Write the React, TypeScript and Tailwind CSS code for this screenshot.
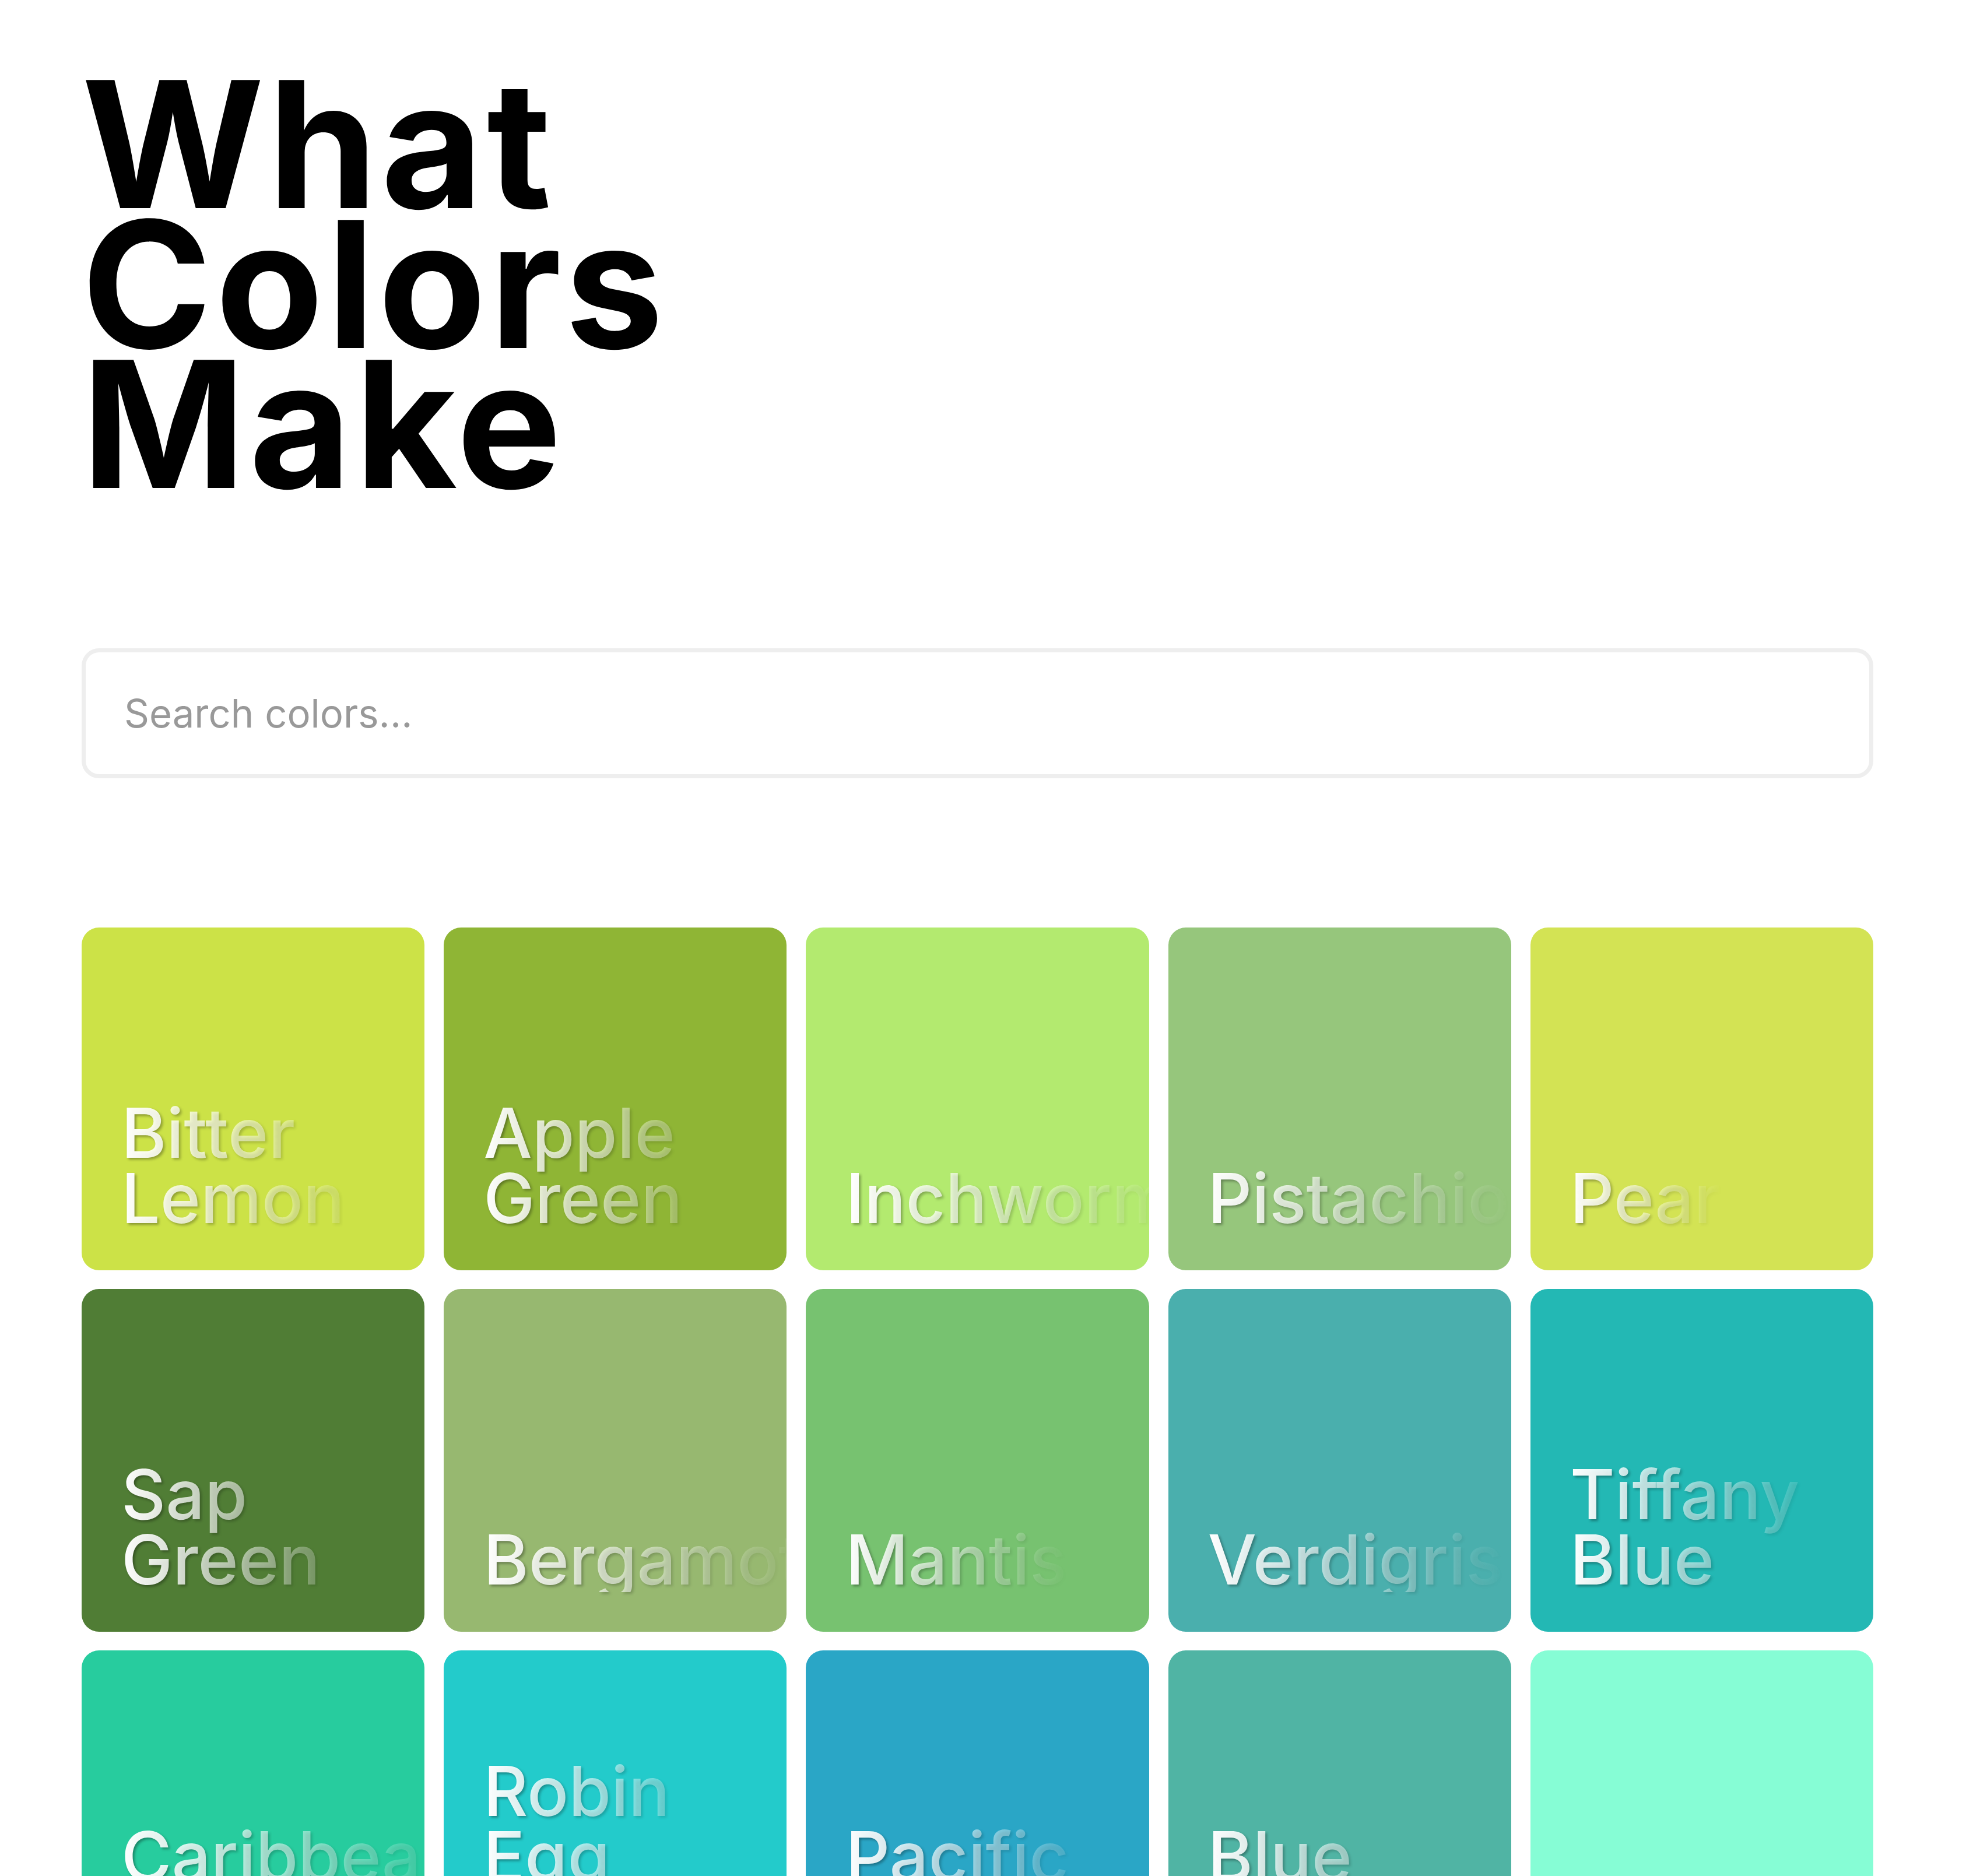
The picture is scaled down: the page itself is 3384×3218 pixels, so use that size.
import React, { useState } from "react";

interface Swatch {
  name: string;
  hex: string;
}

const swatches: Swatch[] = [
  { name: "Bitter Lemon", hex: "#cce247" },
  { name: "Apple Green", hex: "#8fb535" },
  { name: "Inchworm", hex: "#b3ea6f" },
  { name: "Pistachio", hex: "#96c67c" },
  { name: "Pear", hex: "#d3e354" },
  { name: "Sap Green", hex: "#507d35" },
  { name: "Bergamot", hex: "#97b870" },
  { name: "Mantis", hex: "#77c270" },
  { name: "Verdigris", hex: "#4aafad" },
  { name: "Tiffany Blue", hex: "#23b8b4" },
  { name: "Caribbean Green", hex: "#27cc9e" },
  { name: "Robin Egg Blue", hex: "#23cbcb" },
  { name: "Pacific Blue", hex: "#2aa6c6" },
  { name: "Blue Green", hex: "#50b4a4" },
  { name: "Aquamarine", hex: "#86fdd5" },
];

const SwatchCard: React.FC<{ swatch: Swatch }> = ({ swatch }) => {
  return (
    <div
      className="aspect-square rounded-[30px] overflow-hidden flex flex-col justify-end p-[68px]"
      style={{ backgroundColor: swatch.hex }}
    >
      {/* label fades out to the right, shadow follows the alpha */}
      <span className="self-start inline-block text-[118px] leading-[112px] font-medium bg-linear-to-r from-white to-white/0 bg-clip-text text-transparent drop-shadow-[3px_3px_2px_rgba(0,0,0,0.35)]">
        {swatch.name}
      </span>
    </div>
  );
};

export default function App() {
  const [query, setQuery] = useState("");

  const filtered = swatches.filter((s) =>
    s.name.toLowerCase().includes(query.toLowerCase())
  );

  return (
    <div className="min-h-screen bg-white pl-[140px] pr-[171px] pt-[127px] font-['Inter',sans-serif]">
      <h1 className="text-[302px] leading-[240px] font-bold text-black tracking-[0.02em]">
        What
        <br />
        Colors
        <br />
        Make
      </h1>

      <input
        type="text"
        value={query}
        onChange={(e) => setQuery(e.target.value)}
        placeholder="Search colors..."
        className="mt-[265px] block w-full h-[223px] border-[7px] border-[#eeeeee] rounded-[30px] pl-[66px] text-[67px] text-black placeholder:text-[#999999] outline-none"
      />

      <div className="mt-[256px] grid grid-cols-5 gap-x-[33px] gap-y-[32px] pb-[140px]">
        {filtered.map((s) => (
          <SwatchCard key={s.name} swatch={s} />
        ))}
      </div>
    </div>
  );
}
